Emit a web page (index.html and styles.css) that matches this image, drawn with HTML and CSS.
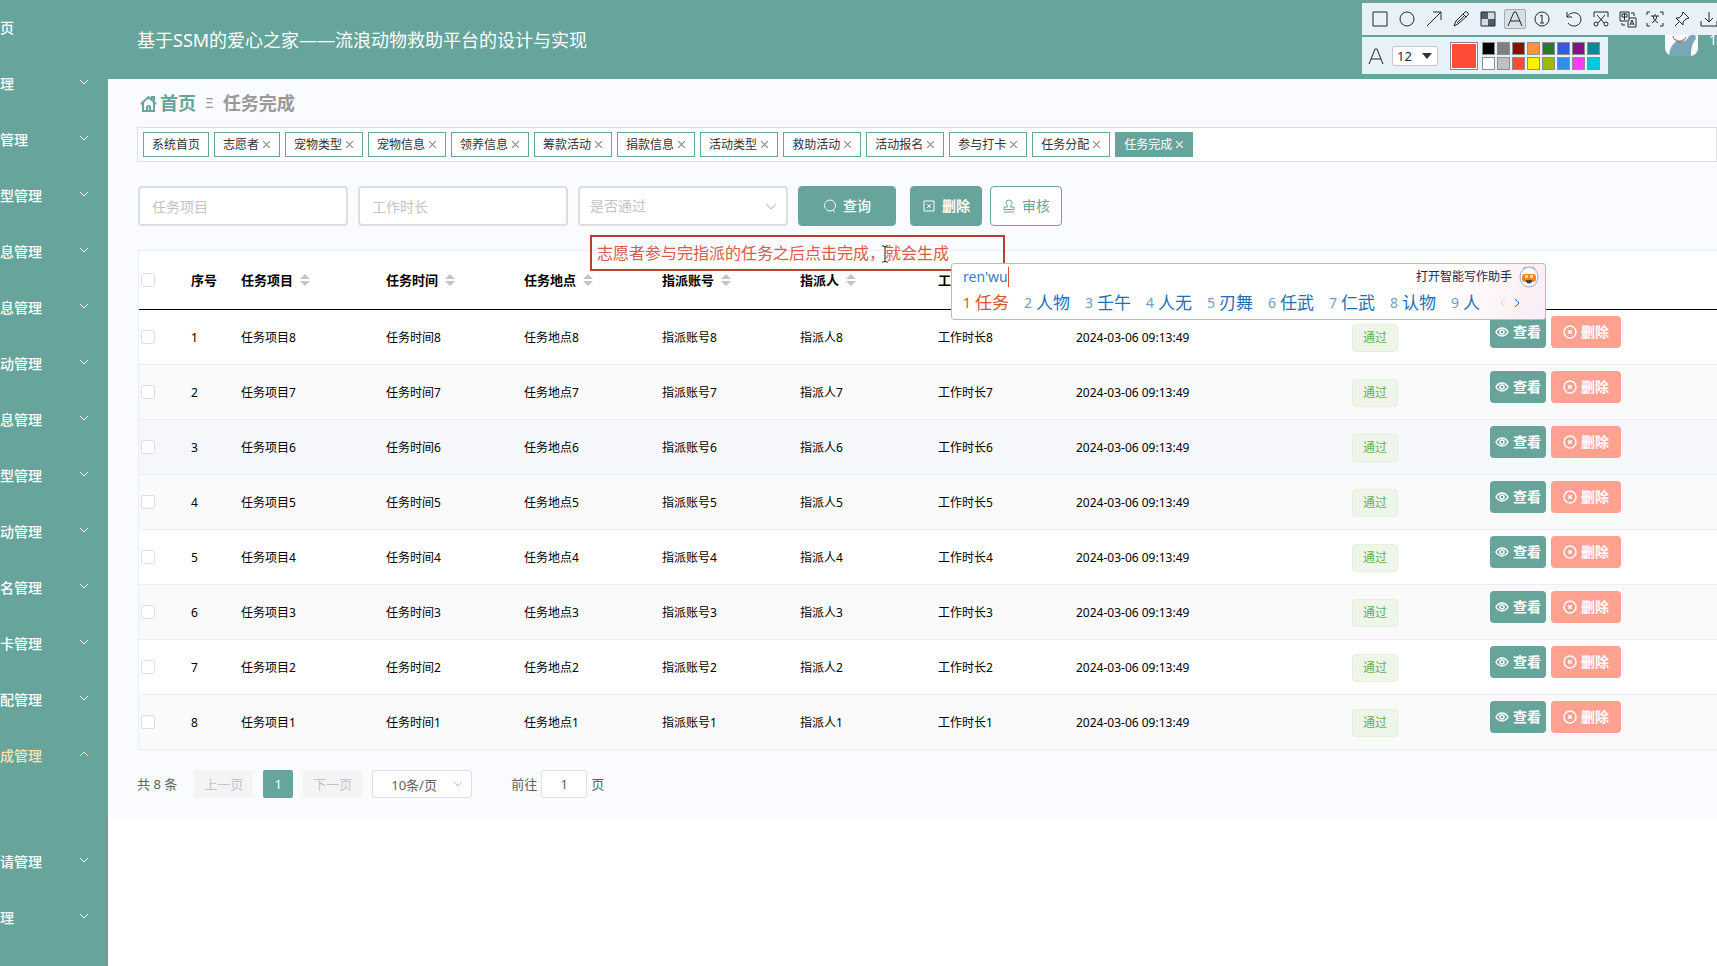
FILE: index.html
```html
<!DOCTYPE html>
<html lang="zh-CN">
<head>
<meta charset="utf-8">
<meta name="viewport" content="width=device-width, initial-scale=1">
<title>任务完成</title>
<link rel="stylesheet" href="styles.css">
</head>
<body>
<svg class="symbols" aria-hidden="true">
  <symbol id="down" viewBox="0 0 10 6"><path d="M1 1l4 4 4-4"/></symbol>
  <symbol id="up" viewBox="0 0 10 6"><path d="M1 5l4-4 4 4"/></symbol>
  <symbol id="close" viewBox="0 0 8 8"><path d="M1 1l6 6M7 1L1 7"/></symbol>
  <symbol id="sort" viewBox="0 0 10 12"><path d="M5 0l5 5H0zM5 12l5-5H0z"/></symbol>
  <symbol id="eye" viewBox="0 0 14 12"><path d="M1 6c3-5.300 9-5.300 12 0-3 5.300-9 5.300-12 0z"/><circle cx="7" cy="6" r="2"/></symbol>
  <symbol id="cancel" viewBox="0 0 14 14"><circle cx="7" cy="7" r="6"/><path d="M5.200 5.200l3.600 3.600M8.800 5.200L5.200 8.800"/></symbol>
</svg>
<div class="app">
  <nav class="side" aria-label="主菜单">
    <a class="item" href="#">页</a>
    <a class="item" href="#">理<svg><use href="#down"/></svg></a>
    <a class="item" href="#">管理<svg><use href="#down"/></svg></a>
    <a class="item" href="#">型管理<svg><use href="#down"/></svg></a>
    <a class="item" href="#">息管理<svg><use href="#down"/></svg></a>
    <a class="item" href="#">息管理<svg><use href="#down"/></svg></a>
    <a class="item" href="#">动管理<svg><use href="#down"/></svg></a>
    <a class="item" href="#">息管理<svg><use href="#down"/></svg></a>
    <a class="item" href="#">型管理<svg><use href="#down"/></svg></a>
    <a class="item" href="#">动管理<svg><use href="#down"/></svg></a>
    <a class="item" href="#">名管理<svg><use href="#down"/></svg></a>
    <a class="item" href="#">卡管理<svg><use href="#down"/></svg></a>
    <a class="item" href="#">配管理<svg><use href="#down"/></svg></a>
    <a class="item open" href="#">成管理<svg><use href="#up"/></svg></a>
    <a class="item" href="#">请管理<svg><use href="#down"/></svg></a>
    <a class="item" href="#">理<svg><use href="#down"/></svg></a>
  </nav>
  <div class="main">
    <header class="top">
      <h1>基于SSM的爱心之家——流浪动物救助平台的设计与实现</h1>
      <div class="user">
        <svg class="avatar" viewBox="0 0 33 33"><rect width="33" height="33" rx="8" fill="#fff"/><path d="M4 33c1-9 4-14 10-15 5 2 8-1 10-5l6-2 1 5c-4 4-5 10-5 17z" fill="#7aa7b8"/><path d="M8 13c1 8 11 8 13 1" fill="none" stroke="#777"/><path d="M10 16q5 4 9 0" fill="none" stroke="#c66"/><path d="M25 11l6-2" stroke="#b64848" stroke-width="3"/><circle cx="12" cy="12" r="1"/><circle cx="18" cy="12" r="1"/></svg>
        <span>1</span>
      </div>
    </header>
    <main class="panel">
      <div class="crumbs">
        <svg class="house" viewBox="0 0 17 17"><path d="M1 9l7.500-7L16 9M3 8v8h11V8M7 16v-4q1.500-2 3 0v4M12 4V2h2v4"/></svg>
        <a href="#">首页</a><span class="sep">Ξ</span><span>任务完成</span>
      </div>
      <div class="tabs">
        <a href="#">系统首页</a>
        <a href="#">志愿者<svg><use href="#close"/></svg></a>
        <a href="#">宠物类型<svg><use href="#close"/></svg></a>
        <a href="#">宠物信息<svg><use href="#close"/></svg></a>
        <a href="#">领养信息<svg><use href="#close"/></svg></a>
        <a href="#">筹款活动<svg><use href="#close"/></svg></a>
        <a href="#">捐款信息<svg><use href="#close"/></svg></a>
        <a href="#">活动类型<svg><use href="#close"/></svg></a>
        <a href="#">救助活动<svg><use href="#close"/></svg></a>
        <a href="#">活动报名<svg><use href="#close"/></svg></a>
        <a href="#">参与打卡<svg><use href="#close"/></svg></a>
        <a href="#">任务分配<svg><use href="#close"/></svg></a>
        <a href="#" class="on">任务完成<svg><use href="#close"/></svg></a>
      </div>
      <form class="filters">
        <input class="field" type="text" placeholder="任务项目" aria-label="任务项目">
        <input class="field" type="text" placeholder="工作时长" aria-label="工作时长">
        <div class="pick wide"><select class="field" aria-label="是否通过"><option>是否通过</option></select><svg><use href="#down"/></svg></div>
        <button type="button" class="btn query"><svg viewBox="0 0 14 14"><circle cx="7" cy="6.500" r="5.500"/><path d="M9 11l3 2"/></svg>查询</button>
        <button type="button" class="btn remove"><svg viewBox="0 0 14 14"><path d="M2 2h10v10H2zM5 5l4 4M9 5L5 9"/></svg>删除</button>
        <button type="button" class="btn audit"><svg viewBox="0 0 14 14"><path d="M5.500 8C5.500 6 4 5.500 4 4a3 3 0 0 1 6 0c0 1.500-1.500 2-1.500 4H12v2.500H2V8zM2 13h10"/></svg>审核</button>
      </form>
      <table class="grid">
        <colgroup><col class="c-check"><col class="c-no"><col class="c-name"><col class="c"><col class="c"><col class="c"><col class="c"><col class="c"><col class="c"><col class="c"><col class="c"><col></colgroup>
        <thead><tr>
          <th><input type="checkbox" aria-label="全选"></th><th>序号</th>
          <th>任务项目<svg><use href="#sort"/></svg></th><th>任务时间<svg><use href="#sort"/></svg></th><th>任务地点<svg><use href="#sort"/></svg></th><th>指派账号<svg><use href="#sort"/></svg></th><th>指派人<svg><use href="#sort"/></svg></th><th>工作时长<svg><use href="#sort"/></svg></th><th></th><th></th><th></th><th></th>
        </tr></thead>
        <tbody>
          <tr><td><input type="checkbox" aria-label="选择 1"></td><td>1</td><td>任务项目8</td><td>任务时间8</td><td>任务地点8</td><td>指派账号8</td><td>指派人8</td><td>工作时长8</td><td>2024-03-06 09:13:49</td><td></td><td><span class="tag">通过</span></td><td><div class="ops"><button class="view"><svg><use href="#eye"/></svg>查看</button><button class="del"><svg><use href="#cancel"/></svg>删除</button></div></td></tr>
          <tr><td><input type="checkbox" aria-label="选择 2"></td><td>2</td><td>任务项目7</td><td>任务时间7</td><td>任务地点7</td><td>指派账号7</td><td>指派人7</td><td>工作时长7</td><td>2024-03-06 09:13:49</td><td></td><td><span class="tag">通过</span></td><td><div class="ops"><button class="view"><svg><use href="#eye"/></svg>查看</button><button class="del"><svg><use href="#cancel"/></svg>删除</button></div></td></tr>
          <tr class="hover"><td><input type="checkbox" aria-label="选择 3"></td><td>3</td><td>任务项目6</td><td>任务时间6</td><td>任务地点6</td><td>指派账号6</td><td>指派人6</td><td>工作时长6</td><td>2024-03-06 09:13:49</td><td></td><td><span class="tag">通过</span></td><td><div class="ops"><button class="view"><svg><use href="#eye"/></svg>查看</button><button class="del"><svg><use href="#cancel"/></svg>删除</button></div></td></tr>
          <tr><td><input type="checkbox" aria-label="选择 4"></td><td>4</td><td>任务项目5</td><td>任务时间5</td><td>任务地点5</td><td>指派账号5</td><td>指派人5</td><td>工作时长5</td><td>2024-03-06 09:13:49</td><td></td><td><span class="tag">通过</span></td><td><div class="ops"><button class="view"><svg><use href="#eye"/></svg>查看</button><button class="del"><svg><use href="#cancel"/></svg>删除</button></div></td></tr>
          <tr><td><input type="checkbox" aria-label="选择 5"></td><td>5</td><td>任务项目4</td><td>任务时间4</td><td>任务地点4</td><td>指派账号4</td><td>指派人4</td><td>工作时长4</td><td>2024-03-06 09:13:49</td><td></td><td><span class="tag">通过</span></td><td><div class="ops"><button class="view"><svg><use href="#eye"/></svg>查看</button><button class="del"><svg><use href="#cancel"/></svg>删除</button></div></td></tr>
          <tr><td><input type="checkbox" aria-label="选择 6"></td><td>6</td><td>任务项目3</td><td>任务时间3</td><td>任务地点3</td><td>指派账号3</td><td>指派人3</td><td>工作时长3</td><td>2024-03-06 09:13:49</td><td></td><td><span class="tag">通过</span></td><td><div class="ops"><button class="view"><svg><use href="#eye"/></svg>查看</button><button class="del"><svg><use href="#cancel"/></svg>删除</button></div></td></tr>
          <tr><td><input type="checkbox" aria-label="选择 7"></td><td>7</td><td>任务项目2</td><td>任务时间2</td><td>任务地点2</td><td>指派账号2</td><td>指派人2</td><td>工作时长2</td><td>2024-03-06 09:13:49</td><td></td><td><span class="tag">通过</span></td><td><div class="ops"><button class="view"><svg><use href="#eye"/></svg>查看</button><button class="del"><svg><use href="#cancel"/></svg>删除</button></div></td></tr>
          <tr><td><input type="checkbox" aria-label="选择 8"></td><td>8</td><td>任务项目1</td><td>任务时间1</td><td>任务地点1</td><td>指派账号1</td><td>指派人1</td><td>工作时长1</td><td>2024-03-06 09:13:49</td><td></td><td><span class="tag">通过</span></td><td><div class="ops"><button class="view"><svg><use href="#eye"/></svg>查看</button><button class="del"><svg><use href="#cancel"/></svg>删除</button></div></td></tr>
        </tbody>
      </table>
      <div class="pager">
        <span>共 8 条</span>
        <button class="step" disabled>上一页</button>
        <button class="num">1</button>
        <button class="step" disabled>下一页</button>
        <div class="pick size"><select aria-label="每页条数"><option>10条/页</option></select><svg><use href="#down"/></svg></div>
        <label class="jump">前往<input type="text" value="1">页</label>
      </div>
    </main>
  </div>
</div>

<div class="note">志愿者参与完指派的任务之后点击完成，就会生成</div>
<svg class="ibeam" viewBox="0 0 8 18"><path d="M1 1h2l1 1 1-1h2M4 2v14M1 17h2l1-1 1 1h2"/></svg>

<div class="ime">
  <div class="ime-top">
    <span class="typed">ren'wu</span>
    <span class="helper">打开智能写作助手</span>
    <svg class="mascot" viewBox="0 0 20 22"><ellipse cx="10" cy="11" rx="9" ry="10" fill="#fff" stroke="#8eacd8"/><path d="M4 3q2-3 4-1M12 2q2-2 4 1" fill="none" stroke="#e88"/><rect x="3" y="8" width="14" height="8" rx="3" fill="#f58220"/><path d="M6 9h3v3H6zM11 9h3v3h-3z" fill="#ffd9a8"/><path d="M7 14h6v2q-3 3-6 0z" fill="#444"/></svg>
  </div>
  <ol class="cands">
    <li class="first"><i>1</i>任务</li><li><i>2</i>人物</li><li><i>3</i>壬午</li><li><i>4</i>人无</li><li><i>5</i>刃舞</li><li><i>6</i>任武</li><li><i>7</i>仁武</li><li><i>8</i>认物</li><li><i>9</i>人</li>
    <li class="turn"><svg viewBox="0 0 6 10"><path class="dim" d="M5 1L1 5l4 4"/></svg><svg viewBox="0 0 6 10"><path d="M1 1l4 4-4 4"/></svg></li>
  </ol>
</div>

<div class="snip">
  <div class="tools">
    <button aria-label="矩形"><svg viewBox="0 0 18 18"><path d="M2 2h14v14H2z"/></svg></button>
    <button aria-label="椭圆"><svg viewBox="0 0 18 18"><circle cx="9" cy="9" r="7"/></svg></button>
    <button aria-label="箭头"><svg viewBox="0 0 18 18"><path d="M2 16L16 2M8 2h8v8"/></svg></button>
    <button aria-label="画笔"><svg viewBox="0 0 18 18"><path d="M2 16l2-5 9-9q2-1 3 1t-1 3l-9 8zM11 4l3 3M5 13l7-7"/></svg></button>
    <button aria-label="马赛克"><svg viewBox="0 0 18 18"><path d="M2 2h14v14H2z"/><path class="fill" d="M2 2h7v7H2zM9 9h7v7H9z"/><path class="half" d="M9 2h7v7H9zM2 9h7v7H2z"/></svg></button>
    <button class="sel" aria-label="文字"><svg viewBox="0 0 18 18"><path d="M2 16L8 2h2l6 14M4 11h10"/></svg></button>
    <button aria-label="序号"><svg viewBox="0 0 18 18"><circle cx="9" cy="9" r="7"/><path d="M7 6l2-1v8M7 13h4"/></svg></button>
    <span class="bar"></span>
    <button aria-label="撤销"><svg viewBox="0 0 18 18"><path d="M2 2v5h5M2 7c3-6 13-6 14 2 0 8-10 9-13 4"/></svg></button>
    <button aria-label="剪切"><svg viewBox="0 0 18 18"><path d="M2 7V2h14v5M5 5l7 8M13 5l-7 8"/><circle cx="4" cy="14" r="2"/><circle cx="14" cy="14" r="2"/></svg></button>
    <button aria-label="翻译"><svg viewBox="0 0 18 18"><path d="M1 2h9v9H1zM3 4h5v3H3zM5.500 3v7M10 8h7v9H9v-5M11 15l2-5 2 5M12 14h2M12 3h3v3M6 15H3v-2"/></svg></button>
    <button aria-label="识别文字"><svg viewBox="0 0 18 18"><path d="M1 5V2h3M14 2h3v3M1 13v3h3M14 16h3v-3M5 6h8M9 4v2M6 13q5-3 5-7M12 13Q7 10 7 6"/></svg></button>
    <button aria-label="钉住"><svg viewBox="0 0 18 18"><path d="M10 2l6 6-3 1-3 3v3L3 8h3l3-3zM6 12l-4 4"/></svg></button>
    <button aria-label="下载"><svg viewBox="0 0 18 18"><path d="M9 2v10M5 8l4 4 4-4M1 11v5h16v-5"/></svg></button>
  </div>
  <div class="style">
    <svg class="big-a" viewBox="0 0 18 18"><path d="M2 17L8 2h2l6 15M4 12h10"/></svg>
    <div class="pick font"><select aria-label="字号"><option>12</option></select><svg viewBox="0 0 10 6"><path d="M0 0h10L5 6z"/></svg></div>
    <span class="current"></span>
    <div class="swatches">
      <i class="k1"></i><i class="k2"></i><i class="k3"></i><i class="k4"></i><i class="k5"></i><i class="k6"></i><i class="k7"></i><i class="k8"></i>
      <i class="k9"></i><i class="k10"></i><i class="k11"></i><i class="k12"></i><i class="k13"></i><i class="k14"></i><i class="k15"></i><i class="k16"></i>
    </div>
  </div>
</div>
</body>
</html>
```

FILE: styles.css
```css
* { box-sizing: border-box; }
body { margin: 0; background: #fff; color: #000; font: 12px/20px "Noto Sans", "Noto Sans CJK SC", sans-serif; overflow: hidden; }
a { color: inherit; text-decoration: none; }
button, input, select { font: inherit; color: inherit; margin: 0; }
button { padding: 0; border: 0; background: none; }
select { appearance: none; }
svg { fill: none; stroke: currentColor; flex: none; }
.symbols { display: none; }

.app { display: flex; min-height: 100vh; }
.main { flex: 1; min-width: 0; }

.side { width: 108px; flex: none; background: #66a49c; color: #fff; font-size: 14px; font-weight: 500; }
.item { display: flex; align-items: center; justify-content: space-between; height: 56px; padding-right: 19px; }
.item svg { width: 10px; height: 6px; margin-bottom: 4px; }
.item.open { color: #fbe3b4; margin-bottom: 50px; }

.top { display: flex; align-items: center; justify-content: space-between; height: 79px; padding-left: 29px; background: #66a49c; color: #fff; }
.top h1 { margin: 0; font-size: 18px; line-height: 24px; font-weight: 400; }
.user { display: flex; align-items: center; gap: 11px; font-size: 14px; }
.avatar { width: 33px; height: 33px; stroke: none; }

.panel { padding: 0 0 19px 29px; background: #fafbfe; }
.crumbs { display: flex; align-items: center; height: 48px; font-size: 18px; font-weight: 700; color: #999; }
.crumbs a, .house { color: #66a49c; }
.house { width: 17px; height: 17px; margin: 0 3px; stroke-width: 2; }
.sep { margin: 0 9px; font-size: 14px; font-weight: 400; }

.tabs { display: flex; gap: 5px; padding: 4px 5px; border: 1px solid #dde0e2; background: #fff; }
.tabs a { display: flex; align-items: center; gap: 3px; height: 25px; padding: 0 8px; border: 1px solid #66a49c; background: #fff; color: #333; white-space: nowrap; }
.tabs svg { width: 9px; height: 9px; color: #888; }
.tabs .on, .tabs .on svg { background: #66a49c; color: #fff; }

.filters { display: flex; padding: 24px 0 24px 1px; font-size: 14px; }
.field { width: 210px; height: 40px; margin-right: 10px; padding: 0 12px; border: 2px solid #dcdfe0; border-radius: 4px; background: #fff; outline: 0; }
.field::placeholder { color: #c0c4cc; opacity: 1; }
.pick { display: flex; align-items: center; position: relative; }
.pick svg { position: absolute; right: 9px; width: 10px; height: 6px; color: #c0c4cc; pointer-events: none; }
.wide .field { padding: 0 10px; color: #c0c4cc; }
.wide svg { right: 21px; width: 12px; height: 7px; }
.btn { display: flex; align-items: center; justify-content: center; gap: 6px; height: 40px; border: 1px solid #66a49c; border-radius: 4px; background: #66a49c; color: #fff; font-weight: 500; }
.btn svg { width: 14px; height: 14px; }
.query { width: 98px; margin-right: 14px; }
.remove { width: 72px; margin-right: 8px; font-weight: 700; }
.audit { width: 72px; background: #fff; color: #66a49c; font-weight: 400; }

.grid { width: 100%; margin-left: 1px; table-layout: fixed; border-collapse: separate; border-spacing: 0; border: solid #ebeef5; border-width: 1px 0 0 1px; background: #fff; }
.c-check { width: 42px; }
.c-no { width: 50px; }
.c-name { width: 145px; }
.c { width: 138px; }
.grid th, .grid td { padding: 0 10px; text-align: left; white-space: nowrap; }
.grid th { height: 59px; border-bottom: 1px solid #000; font-size: 13px; }
.grid td { height: 55px; padding-top: 2px; border-bottom: 1px solid #ebeef5; }
.grid th:first-child, .grid td:first-child { padding: 0 2px; }
.grid th svg { width: 10px; height: 12px; margin-left: 7px; vertical-align: -1px; fill: #c0c4cc; stroke: none; }
.grid tbody tr:nth-child(even) { background: #fafafa; }
.grid tbody .hover { background: #f5f7fa; }
.grid input { display: block; appearance: none; width: 14px; height: 14px; border: 1px solid #dcdfe6; border-radius: 2px; background: #fff; }
.tag { display: inline-block; height: 28px; padding: 0 10px; border: 1px solid #e1f3d8; border-radius: 4px; background: #f0f5ea; color: #67b04a; line-height: 26px; }
.ops { display: flex; gap: 5px; padding-bottom: 12px; font-size: 14px; font-weight: 700; color: #fff; }
.ops button { display: flex; align-items: center; justify-content: center; gap: 4px; height: 32px; border-radius: 4px; }
.ops svg { width: 14px; height: 14px; stroke-width: 1.5; }
.view { width: 56px; background: #66a49c; }
.del { width: 70px; background: #ffa191; }

.pager { display: flex; align-items: center; padding-top: 20px; font-size: 13px; line-height: 28px; color: #606266; }
.step { width: 59px; height: 28px; margin-left: 17px; border-radius: 2px; background: #f4f4f5; color: #c0c4cc; }
.num { width: 30px; height: 28px; margin-left: 10px; border-radius: 2px; background: #66a49c; color: #fff; }
.num + .step { margin-left: 10px; }
.size { margin: 0 39px 0 10px; }
.size select { width: 100px; height: 28px; padding: 0 18px; border: 1px solid #dcdfe6; border-radius: 3px; background: #fff; }
.jump { display: flex; gap: 4px; }
.jump input { width: 46px; height: 28px; padding: 0; border: 1px solid #dcdfe6; border-radius: 3px; background: #fff; text-align: center; }

/* floating layers */
.note { position: absolute; left: 590px; top: 235px; width: 415px; height: 36px; padding-left: 5px; border: 2px solid #b8402f; color: #dc5a4a; font-size: 16px; line-height: 32px; white-space: nowrap; }
.ibeam { position: absolute; left: 881px; top: 245px; width: 8px; height: 18px; color: #222; }
.ime { position: absolute; left: 951px; top: 263px; width: 595px; height: 57px; padding: 0 6px 0 11px; border: 1px solid #a3c3d8; border-radius: 3px; background: linear-gradient(100deg, #fff 82%, #fdf0f4 96%, #f6eefb); }
.ime-top { display: flex; align-items: center; height: 26px; color: #222b45; }
.typed { border-right: 1px solid #e0502a; font-size: 14px; color: #2f7fca; }
.helper { margin: 0 7px 0 auto; }
.mascot { width: 20px; height: 22px; stroke: none; }
.cands { display: flex; gap: 15px; margin: 0; padding: 0; list-style: none; font-size: 17px; line-height: 26px; color: #1c6fb8; }
.cands li { display: flex; align-items: center; white-space: nowrap; }
.cands i { width: 12px; font-size: 14px; font-style: normal; color: #6f9fc8; }
.cands .first, .cands .first i { color: #d9532c; }
.turn { gap: 8px; padding-left: 5px; }
.turn svg { width: 6px; height: 10px; }
.turn .dim { stroke: #c5d6e4; }

.snip { position: absolute; right: 0; top: 3px; width: 355px; color: #1f2a35; }
.tools { display: flex; align-items: center; gap: 5px; height: 32px; padding-left: 7px; background: #e8f0f8; overflow: hidden; }
.tools button { display: flex; align-items: center; justify-content: center; flex: none; width: 22px; height: 20px; }
.tools svg { width: 18px; height: 18px; }
.tools .sel { border: 1px solid #a5abb1; border-radius: 2px; background: #dae0e7; }
.tools .fill { fill: #1f2a35; fill-opacity: .75; stroke: none; }
.tools .half { fill: #1f2a35; fill-opacity: .1; stroke: none; }
.bar { width: 1px; height: 14px; background: #c4ccd4; }
.style { display: flex; align-items: center; width: 246px; height: 37px; margin-top: 2px; padding-left: 5px; background: #e8f0f8; }
.big-a { width: 18px; height: 18px; }
.font { margin: 0 12px 0 7px; }
.font select { width: 46px; height: 20px; padding: 0 4px; border: 1px solid #c2c8ce; border-radius: 2px; background: #fff; font-size: 13px; line-height: 18px; }
.font svg { right: 6px; fill: #333; stroke: none; }
.current { width: 28px; height: 28px; margin-right: 4px; border: 1px solid #888; outline: 1px solid #fff; outline-offset: -2px; background: #ff4b37; }
.swatches { display: grid; grid-template-columns: repeat(8, 13px); gap: 2px; }
.swatches i { height: 13px; border: 1px solid #8b8f94; }
.k1 { background: #000; } .k2 { background: #808080; } .k3 { background: #8a0f00; } .k4 { background: #ff9138; }
.k5 { background: #2b7a2b; } .k6 { background: #355bd8; } .k7 { background: #861089; } .k8 { background: #008b96; }
.k9 { background: #fff; } .k10 { background: #c0c0c0; } .k11 { background: #ff4b37; } .k12 { background: #fff200; }
.k13 { background: #9abd00; } .k14 { background: #338ee8; } .k15 { background: #fc3cf5; } .k16 { background: #00c8de; }
```
